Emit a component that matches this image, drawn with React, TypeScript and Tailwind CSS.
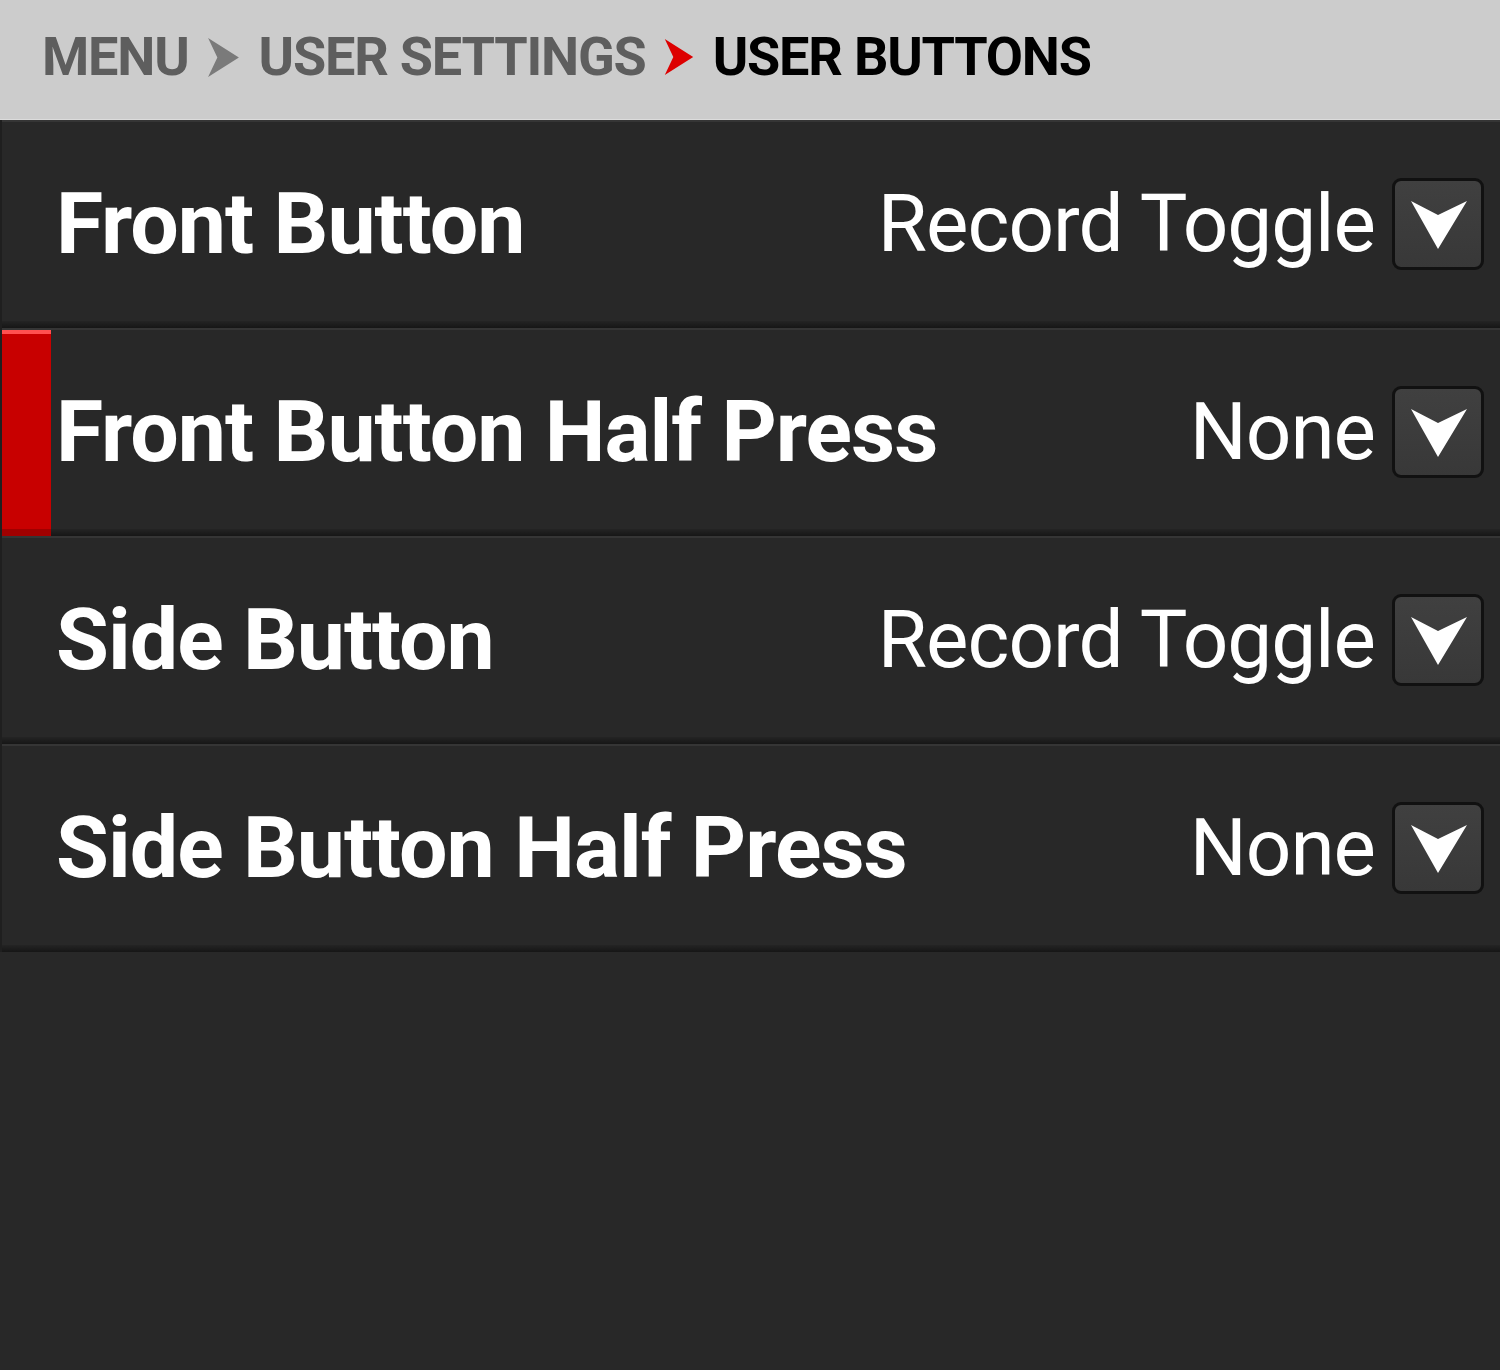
import React from "react";

const rows = [
  { label: "Front Button", value: "Record Toggle", active: false },
  { label: "Front Button Half Press", value: "None", active: true },
  { label: "Side Button", value: "Record Toggle", active: false },
  { label: "Side Button Half Press", value: "None", active: false },
];

function Chevron({ color, className }: { color: string; className?: string }) {
  return (
    <svg viewBox="0 0 30 38" className={className}>
      <polygon points="0,0 30,19 0,38 9,19" fill={color} />
    </svg>
  );
}

function DropButton() {
  return (
    <div className="w-[92px] h-[92px] rounded-[9px] border-[3px] border-[#111111] bg-gradient-to-b from-[#404040] to-[#383838] flex items-center justify-center shrink-0">
      <svg viewBox="0 0 86 86" className="w-[86px] h-[86px]">
        <polygon points="16,20 43,34 72,20 43,68" fill="#ffffff" />
      </svg>
    </div>
  );
}

export default function App() {
  return (
    <div
      className="w-[1500px] h-[1370px] bg-[#282828] flex flex-col"
      style={{ fontFamily: "Roboto, 'Liberation Sans', sans-serif" }}
    >
      <div className="h-[120px] bg-[#cccccc] border-b border-[#dcdcdc] flex items-center pl-[42px] pb-[5px] shrink-0">
        <div className="flex items-center text-[54px] font-bold leading-none tracking-[-1.2px]">
          <span className="text-[#5e5e5e]">MENU</span>
          <Chevron color="#7a7a7a" className="w-[31px] h-[39px] ml-[19px] mr-[20px]" />
          <span className="text-[#5e5e5e]">USER SETTINGS</span>
          <Chevron color="#dd0000" className="w-[32px] h-[36px] ml-[17px] mr-[18px]" />
          <span className="text-black">USER BUTTONS</span>
        </div>
      </div>
      <div className="flex flex-col">
        {rows.map((r, i) => (
          <div
            key={i}
            className="h-[208px] flex border-l-2 border-[#1f1f1f] bg-[#282828] relative"
          >
            <div className="absolute left-0 right-0 top-0 h-[2px] bg-[#353535]" />
            <div className="absolute left-0 right-0 bottom-0 h-[7px] bg-gradient-to-b from-[#242424] to-[#161616]" />
            {r.active ? (
              <div className="w-[49px] shrink-0 flex flex-col relative z-10 pt-[2px]">
                <div className="h-[4px] bg-[#ff5050]" />
                <div className="flex-1 bg-[#c80000]" />
                <div className="h-[7px] bg-[#a00000]" />
              </div>
            ) : (
              <div className="w-[49px] shrink-0" />
            )}
            <div className="flex-1 flex items-center justify-between pl-[5px] pr-[16px] relative z-10">
              <span className="text-white font-bold text-[86px] leading-none tracking-[-1px]">
                {r.label}
              </span>
              <div className="flex items-center gap-[17px]">
                <span className="text-white text-[80px] leading-none tracking-[-1px]">{r.value}</span>
                <DropButton />
              </div>
            </div>
          </div>
        ))}
      </div>
    </div>
  );
}
